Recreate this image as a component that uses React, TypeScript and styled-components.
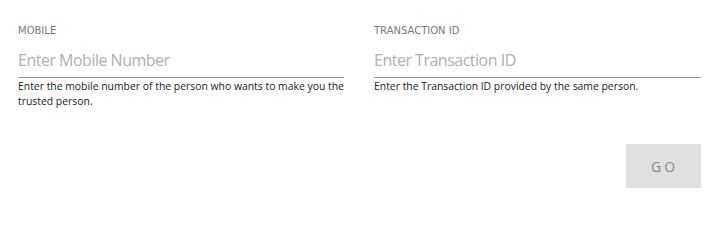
import React from "react";
import styled, { createGlobalStyle } from "styled-components";

const Global = createGlobalStyle`
  html, body { margin: 0; padding: 0; background: #fff; }
  body { font-family: "Open Sans", "Liberation Sans", sans-serif; }
  * { box-sizing: border-box; }
`;

const Page = styled.div`
  width: 713px;
  padding: 23px 12px 13px 18px;
`;

const Fields = styled.div`
  display: grid;
  grid-template-columns: 326px 327px;
  column-gap: 30px;
`;

const Field = styled.div`
  display: flex;
  flex-direction: column;
`;

const Label = styled.label`
  font-family: "DejaVu Sans", "Open Sans", sans-serif;
  font-size: 10px;
  line-height: 16px;
  color: #7a7a7a;
  text-transform: uppercase;
`;

const Input = styled.input`
  margin-top: 10px;
  border: none;
  border-bottom: 1px solid #999;
  outline: none;
  padding: 0 0 6px 0;
  font-family: inherit;
  font-size: 16px;
  letter-spacing: -0.5px;
  line-height: 22px;
  color: #333;
  background: transparent;
  &::placeholder { color: #b0b0b0; }
`;

const Help = styled.p`
  margin: 1px 0 0;
  font-size: 10.4px;
  line-height: 15px;
  color: #222;
`;

const Actions = styled.div`
  display: flex;
  justify-content: flex-end;
  margin-top: 35px;
`;

const GoButton = styled.button`
  width: 75px;
  height: 44px;
  border: none;
  background: #e0e0e0;
  color: #8a8a8a;
  font-family: inherit;
  font-size: 14px;
  letter-spacing: 3px;
  padding: 0 0 0 2px;
`;

export default function App() {
  return (
    <>
      <Global />
      <Page>
        <Fields>
          <Field>
            <Label>Mobile</Label>
            <Input placeholder="Enter Mobile Number" />
            <Help>Enter the mobile number of the person who wants to make you the trusted person.</Help>
          </Field>
          <Field>
            <Label>Transaction ID</Label>
            <Input placeholder="Enter Transaction ID" />
            <Help>Enter the Transaction ID provided by the same person.</Help>
          </Field>
        </Fields>
        <Actions>
          <GoButton>GO</GoButton>
        </Actions>
      </Page>
    </>
  );
}
